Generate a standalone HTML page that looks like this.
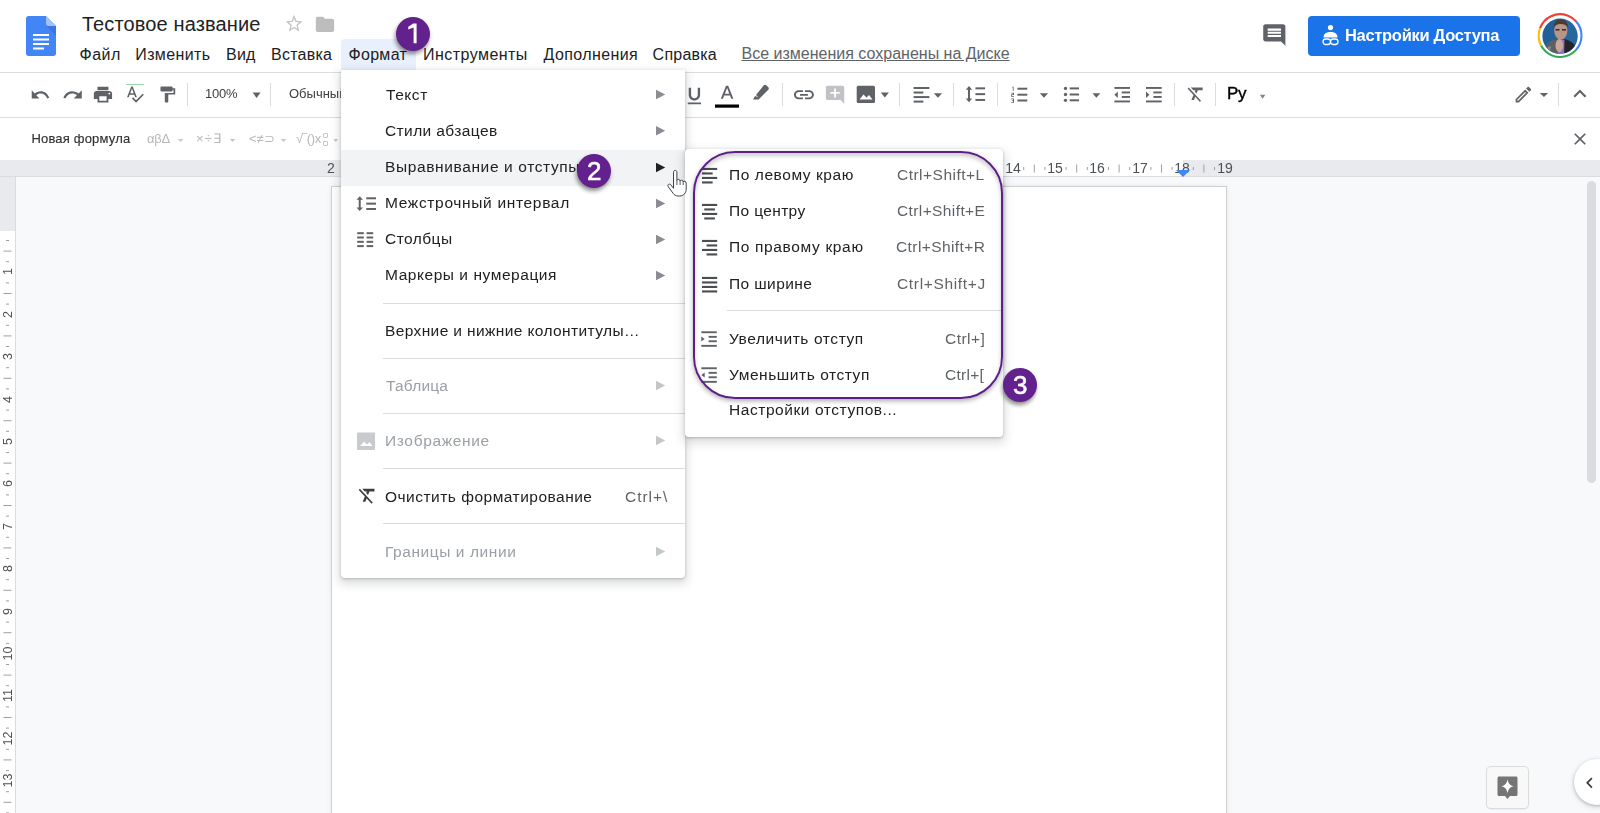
<!DOCTYPE html>
<html><head><meta charset="utf-8"><style>
html,body{margin:0;padding:0;}
body{width:1600px;height:813px;overflow:hidden;position:relative;background:#f8f9fa;font-family:"Liberation Sans", sans-serif;}
</style></head><body>
<div style="position:absolute;left:0px;top:0px;width:1600px;height:72px;background:#fff"></div>
<div style="position:absolute;left:0px;top:72px;width:1600px;height:1px;background:#dadce0"></div>
<div style="position:absolute;left:0px;top:73px;width:1600px;height:44px;background:#fff"></div>
<div style="position:absolute;left:0px;top:117px;width:1600px;height:1px;background:#dadce0"></div>
<div style="position:absolute;left:0px;top:118px;width:1600px;height:42px;background:#fff"></div>
<div style="position:absolute;left:0px;top:160px;width:1600px;height:16px;background:#e8eaed"></div>
<div style="position:absolute;left:419px;top:160px;width:764px;height:16px;background:#fff"></div>
<div style="position:absolute;left:0px;top:176px;width:1600px;height:1px;background:#dadce0"></div>
<div style="position:absolute;left:0px;top:177px;width:15px;height:54px;background:#e8eaed"></div>
<div style="position:absolute;left:0px;top:231px;width:15px;height:582px;background:#fff"></div>
<div style="position:absolute;left:15px;top:177px;width:1px;height:636px;background:#dadce0"></div>
<div style="position:absolute;left:332px;top:187px;width:894px;height:700px;background:#fff;box-shadow:0 0 0 1px #d0d0d0, 0 0 6px rgba(60,64,67,.12)"></div>
<div style="position:absolute;left:1587px;top:181px;width:9px;height:302px;background:#dadce0;border-radius:5px"></div>
<svg style="position:absolute;left:26px;top:16px;width:30px;height:40px;overflow:visible;" viewBox="0 0 30 40"><path d="M2.5 0H20L30 10V37.5C30 38.9 28.9 40 27.5 40H2.5C1.1 40 0 38.9 0 37.5V2.5C0 1.1 1.1 0 2.5 0Z" fill="#4285f4"/><path d="M20 0L30 10H22.5C21.1 10 20 8.9 20 7.5Z" fill="#a1c2fa"/><path d="M20.5 10L30 19.5V10Z" fill="#3367d6" opacity=".5"/><rect x="7" y="18" width="16" height="2" fill="#fff"/><rect x="7" y="22.5" width="16" height="2" fill="#fff"/><rect x="7" y="27" width="16" height="2" fill="#fff"/><rect x="7" y="31.5" width="11" height="2" fill="#fff"/></svg>
<div style="position:absolute;left:81.90px;top:14.00px;font-size:20px;font-weight:400;color:#202124;letter-spacing:0.125px;line-height:1;white-space:nowrap;">Тестовое название</div>
<svg style="position:absolute;left:284.32px;top:13.42px;width:20.16px;height:21.35px;" viewBox="0 0 24 24" preserveAspectRatio="none"><path d="M22 9.24l-7.19-.62L12 2 9.19 8.63 2 9.24l5.46 4.73L5.82 21 12 17.27 18.18 21l-1.63-7.03L22 9.24zM12 15.4l-3.76 2.27 1-4.28-3.32-2.88 4.38-.38L12 6.1l1.71 4.04 4.38.38-3.32 2.88 1 4.28L12 15.4z" fill="#c4c4c4"/></svg>
<svg style="position:absolute;left:314.17px;top:13.10px;width:21.96px;height:22.80px;" viewBox="0 0 24 24" preserveAspectRatio="none"><path d="M10 4H4c-1.1 0-1.99.9-1.99 2L2 18c0 1.1.9 2 2 2h16c1.1 0 2-.9 2-2V8c0-1.1-.9-2-2-2h-8l-2-2z" fill="#bdbdbd"/></svg>
<div style="position:absolute;left:341px;top:39px;width:75px;height:32px;background:#e8f0fe;border-radius:4px 4px 0 0"></div>
<div style="position:absolute;left:79.50px;top:47.00px;font-size:16px;font-weight:400;color:#202124;letter-spacing:0.500px;line-height:1;white-space:nowrap;">Файл</div>
<div style="position:absolute;left:135.25px;top:47.00px;font-size:16px;font-weight:400;color:#202124;letter-spacing:0.393px;line-height:1;white-space:nowrap;">Изменить</div>
<div style="position:absolute;left:226.00px;top:47.00px;font-size:16px;font-weight:400;color:#202124;letter-spacing:0.250px;line-height:1;white-space:nowrap;">Вид</div>
<div style="position:absolute;left:271.00px;top:47.00px;font-size:16px;font-weight:400;color:#202124;letter-spacing:0.250px;line-height:1;white-space:nowrap;">Вставка</div>
<div style="position:absolute;left:348.50px;top:47.00px;font-size:16px;font-weight:400;color:#202124;letter-spacing:0.300px;line-height:1;white-space:nowrap;">Формат</div>
<div style="position:absolute;left:423.00px;top:47.00px;font-size:16px;font-weight:400;color:#202124;letter-spacing:0.460px;line-height:1;white-space:nowrap;">Инструменты</div>
<div style="position:absolute;left:543.60px;top:47.00px;font-size:16px;font-weight:400;color:#202124;letter-spacing:0.378px;line-height:1;white-space:nowrap;">Дополнения</div>
<div style="position:absolute;left:652.60px;top:47.00px;font-size:16px;font-weight:400;color:#202124;letter-spacing:0.233px;line-height:1;white-space:nowrap;">Справка</div>
<div style="position:absolute;left:741.50px;top:46.00px;font-size:16px;font-weight:400;color:#5f6368;letter-spacing:0.003px;line-height:1;white-space:nowrap;text-decoration:underline;text-underline-offset:1px">Все изменения сохранены на Диске</div>
<svg style="position:absolute;left:1260.68px;top:22.04px;width:26.64px;height:25.92px;" viewBox="0 0 24 24" preserveAspectRatio="none"><path d="M21.99 4c0-1.1-.89-2-1.99-2H4c-1.1 0-2 .9-2 2v12c0 1.1.9 2 2 2h14l4 4-.01-18zM18 14H6v-2h12v2zm0-3H6V9h12v2zm0-3H6V6h12v2z" fill="#5f6368"/></svg>
<div style="position:absolute;left:1308px;top:16px;width:212px;height:40px;background:#1a73e8;border-radius:4px"></div>
<svg style="position:absolute;left:1322px;top:25px;width:17px;height:21px;overflow:visible;" viewBox="0 0 17 21"><circle cx="8.5" cy="2.6" r="2.6" fill="#fff"/><path d="M1.5 12.5C1.5 8.5 4.5 7 8.5 7S15.5 8.5 15.5 12.5Z" fill="#fff"/><rect x="1" y="14" width="7.5" height="5.5" rx="2.75" fill="none" stroke="#fff" stroke-width="1.3"/><rect x="8.5" y="14" width="7.5" height="5.5" rx="2.75" fill="none" stroke="#fff" stroke-width="1.3"/></svg>
<div style="position:absolute;left:1345.00px;top:27.00px;font-size:16.5px;font-weight:700;color:#fff;letter-spacing:-0.312px;line-height:1;white-space:nowrap;will-change:transform;">Настройки Доступа</div>
<svg style="position:absolute;left:1537px;top:13px;width:46px;height:46px;overflow:visible;" viewBox="0 0 46 46"><circle cx="23.1" cy="22.6" r="21.4" fill="none" stroke="#ea4335" stroke-width="2.1" stroke-dasharray="44.07 300" transform="rotate(200 23.1 22.6)"/><circle cx="23.1" cy="22.6" r="21.4" fill="none" stroke="#4285f4" stroke-width="2.1" stroke-dasharray="31.37 300" transform="rotate(318 23.1 22.6)"/><circle cx="23.1" cy="22.6" r="21.4" fill="none" stroke="#34a853" stroke-width="2.1" stroke-dasharray="41.09 300" transform="rotate(402 23.1 22.6)"/><circle cx="23.1" cy="22.6" r="21.4" fill="none" stroke="#fbbc04" stroke-width="2.1" stroke-dasharray="17.93 300" transform="rotate(512 23.1 22.6)"/><clipPath id="av"><circle cx="23" cy="23.2" r="17.6"/></clipPath><g clip-path="url(#av)"><rect width="46" height="46" fill="#22609a"/><rect x="28" width="18" height="46" fill="#2a6ca4" opacity=".6"/><ellipse cx="23.8" cy="17.5" rx="6.6" ry="9.2" fill="#b89687"/><path d="M16.8 15C16.5 9 19.5 6.5 23.8 6.5S31.2 9 30.8 15C29.5 12 27.5 11 23.8 11S18 12 16.8 15Z" fill="#4b3b31"/><rect x="18.5" y="16" width="4" height="1.6" fill="#3c2e2a"/><rect x="25" y="16" width="4" height="1.6" fill="#3c2e2a"/><path d="M6 46L10 31C13 27 18 26 21 27L23 46Z" fill="#5e5f63"/><path d="M26.5 26C31 26.5 36 29 38 33L41 46H27Z" fill="#242528"/><path d="M20 28L27.5 26.5 27 46H21Z" fill="#8b78c4"/><ellipse cx="22.3" cy="32.5" rx="3.8" ry="6.5" fill="#c9a79c"/><path d="M11 34L14 33 13 38 10 39Z" fill="#8a8b8f"/></g></svg>
<svg style="position:absolute;left:29.79px;top:83.70px;width:20.52px;height:21.60px;" viewBox="0 0 24 24" preserveAspectRatio="none"><path d="M12.5 8c-2.65 0-5.05.99-6.9 2.6L2 7v9h9l-3.62-3.62c1.39-1.16 3.16-1.88 5.12-1.88 3.54 0 6.55 2.31 7.6 5.5l2.37-.78C21.08 11.03 17.15 8 12.5 8z" fill="#5f6368"/></svg>
<svg style="position:absolute;left:62.12px;top:83.70px;width:21.58px;height:21.60px;" viewBox="0 0 24 24" preserveAspectRatio="none"><path d="M18.4 10.6C16.55 8.99 14.15 8 11.5 8c-4.65 0-8.58 3.03-9.96 7.22L3.9 16c1.05-3.19 4.05-5.5 7.6-5.5 1.95 0 3.73.72 5.12 1.88L13 16h9V7l-3.6 3.6z" fill="#5f6368"/></svg>
<svg style="position:absolute;left:92.17px;top:83.88px;width:21.90px;height:21.00px;" viewBox="0 0 24 24" preserveAspectRatio="none"><path d="M19 8H5c-1.66 0-3 1.34-3 3v6h4v4h12v-4h4v-6c0-1.66-1.34-3-3-3zm-3 11H8v-5h8v5zm3-7c-.55 0-1-.45-1-1s.45-1 1-1 1 .45 1 1-.45 1-1 1zm-1-9H6v4h12V3z" fill="#5f6368"/></svg>
<svg style="position:absolute;left:124.88px;top:84.41px;width:19.69px;height:19.94px;" viewBox="0 0 24 24" preserveAspectRatio="none"><path d="M12.45 16h2.09L9.43 3H7.57L2.46 16h2.09l1.12-3h5.64l1.14 3zm-6.02-5L8.5 5.48 10.57 11H6.43zm15.16.59l-8.09 8.09L9.83 16l-1.41 1.41 5.09 5.09L23 13l-1.41-1.41z" fill="#5f6368"/></svg>
<div style="position:absolute;left:126px;top:84px;width:18px;height:1px;background:#9fd8ae"></div>
<svg style="position:absolute;left:156.53px;top:84.90px;width:20.82px;height:19.20px;" viewBox="0 0 24 24" preserveAspectRatio="none"><path d="M18 4V3c0-.55-.45-1-1-1H5c-.55 0-1 .45-1 1v4c0 .55.45 1 1 1h12c.55 0 1-.45 1-1V6h1v4H9v11c0 .55.45 1 1 1h2c.55 0 1-.45 1-1v-9h8V4h-3z" fill="#5f6368"/></svg>
<div style="position:absolute;left:187px;top:83px;width:1px;height:23px;background:#dadce0"></div>
<div style="position:absolute;left:270px;top:83px;width:1px;height:23px;background:#dadce0"></div>
<div style="position:absolute;left:782px;top:83px;width:1px;height:23px;background:#dadce0"></div>
<div style="position:absolute;left:899px;top:83px;width:1px;height:23px;background:#dadce0"></div>
<div style="position:absolute;left:953px;top:83px;width:1px;height:23px;background:#dadce0"></div>
<div style="position:absolute;left:997px;top:83px;width:1px;height:23px;background:#dadce0"></div>
<div style="position:absolute;left:1174px;top:83px;width:1px;height:23px;background:#dadce0"></div>
<div style="position:absolute;left:1215px;top:83px;width:1px;height:23px;background:#dadce0"></div>
<div style="position:absolute;left:1558px;top:83px;width:1px;height:23px;background:#dadce0"></div>
<div style="position:absolute;left:204.50px;top:87.00px;font-size:13px;font-weight:400;color:#3c4043;letter-spacing:-0.200px;line-height:1;white-space:nowrap;will-change:transform;">100%</div>
<svg style="position:absolute;left:247.20px;top:81.60px;width:19.20px;height:25.44px;" viewBox="0 0 24 24" preserveAspectRatio="none"><path d="M7 10l5 5 5-5z" fill="#5f6368"/></svg>
<div style="position:absolute;left:288.50px;top:87.00px;font-size:13px;font-weight:400;color:#3c4043;letter-spacing:0.000px;line-height:1;white-space:nowrap;will-change:transform;">Обычный текст</div>
<svg style="position:absolute;left:683.25px;top:85.05px;width:22.80px;height:22.00px;" viewBox="0 0 24 24" preserveAspectRatio="none"><path d="M12 17c3.31 0 6-2.69 6-6V3h-2.5v8c0 1.93-1.57 3.5-3.5 3.5S8.5 12.93 8.5 11V3H6v8c0 3.31 2.69 6 6 6zm-7 2v2h14v-2H5z" fill="#5f6368"/></svg>
<svg style="position:absolute;left:715px;top:84px;width:25px;height:24px;overflow:visible;" viewBox="0 0 25 24"><path d="M5.8 14.8L11 1.7h2.2l5.2 13.1h-2.2l-1.2-3.2H9.2L8 14.8ZM9.9 9.7h4.4L12.1 3.9Z" fill="#5f6368"/><rect x="0" y="20.5" width="24" height="3.2" fill="#000"/></svg>
<svg style="position:absolute;left:752px;top:84px;width:18px;height:16px;overflow:visible;" viewBox="0 0 18 16"><path d="M3 12L1 15.5H6.5L8 14Z" fill="#5f6368"/><path d="M4 11L7.5 14.5 16.3 5.7C17 5 17 4 16.3 3.3L14.2 1.2C13.5.5 12.5.5 11.8 1.2Z" fill="#5f6368"/></svg>
<svg style="position:absolute;left:791.51px;top:83.50px;width:23.88px;height:21.60px;" viewBox="0 0 24 24" preserveAspectRatio="none"><path d="M3.9 12c0-1.71 1.39-3.1 3.1-3.1h4V7H7c-2.76 0-5 2.24-5 5s2.24 5 5 5h4v-1.9H7c-1.71 0-3.1-1.39-3.1-3.1zM8 13h8v-2H8v2zm9-6h-4v1.9h4c1.71 0 3.1 1.39 3.1 3.1s-1.39 3.1-3.1 3.1h-4V17h4c2.76 0 5-2.24 5-5s-2.24-5-5-5z" fill="#5f6368"/></svg>
<svg style="position:absolute;left:824.16px;top:83.91px;width:22.08px;height:21.48px;" viewBox="0 0 24 24" preserveAspectRatio="none"><path d="M22 4c0-1.1-.9-2-2-2H4c-1.1 0-1.99.9-1.99 2L2 16c0 1.1.9 2 2 2h14l4 4-.01-18zM17 11h-4v4h-2v-4H7V9h4V5h2v4h4v2z" fill="#c0c2c5"/></svg>
<svg style="position:absolute;left:856px;top:85px;width:20px;height:18px;overflow:visible;" viewBox="0 0 20 18"><rect x="0.7" y="0.7" width="18.3" height="17.2" rx="1.5" fill="#5f6368"/><path d="M3.5 14.5L7.5 9.5 10.5 12.5 13 10 16.5 14.5Z" fill="#fff"/></svg>
<svg style="position:absolute;left:875.06px;top:83.00px;width:19.68px;height:23.04px;" viewBox="0 0 24 24" preserveAspectRatio="none"><path d="M7 10l5 5 5-5z" fill="#5f6368"/></svg>
<svg style="position:absolute;left:0;top:0;width:1600px;height:813px;overflow:visible;pointer-events:none" viewBox="0 0 1600 813"><rect x="913.6" y="87.00" width="15.8" height="2.0" fill="#5f6368"/><rect x="913.60" y="91.53" width="9.80" height="2.0" fill="#5f6368"/><rect x="913.6" y="96.07" width="15.8" height="2.0" fill="#5f6368"/><rect x="913.60" y="100.60" width="9.80" height="2.0" fill="#5f6368"/></svg>
<svg style="position:absolute;left:928.39px;top:83.60px;width:19.92px;height:22.08px;" viewBox="0 0 24 24" preserveAspectRatio="none"><path d="M7 10l5 5 5-5z" fill="#5f6368"/></svg>
<svg style="position:absolute;left:0;top:0;width:1600px;height:813px;overflow:visible" viewBox="0 0 1600 813"><path d="M968.98 86.1L972.17 89.70H969.98V98.60H972.17L968.98 102.2L965.80 98.60H967.98V89.70H965.80Z" fill="#5f6368"/><rect x="975.45" y="87.35" width="9.65" height="2" fill="#5f6368"/><rect x="975.45" y="93.15" width="9.65" height="2" fill="#5f6368"/><rect x="975.45" y="98.95" width="9.65" height="2" fill="#5f6368"/></svg>
<svg style="position:absolute;left:0;top:0;width:1600px;height:813px;overflow:visible" viewBox="0 0 1600 813"><rect x="1017.40" y="87.70" width="9.90" height="2" fill="#5f6368"/><rect x="1017.40" y="93.70" width="9.90" height="2" fill="#5f6368"/><rect x="1017.40" y="99.50" width="9.90" height="2" fill="#5f6368"/><path d="M1012.4000000000001 86.7H1013.6V90.9H1012.8000000000001V87.60000000000001H1012.0Z" fill="#5f6368"/><path d="M1011.2 92.7H1014.0V94.9H1012.1V95.9H1014.0V96.7H1011.2V94.3H1013.1V93.5H1011.2Z" fill="#5f6368"/><path d="M1011.2 98.5H1014.0V102.7H1011.2V101.9H1013.1V101.0H1011.8000000000001V100.2H1013.1V99.3H1011.2Z" fill="#5f6368"/></svg>
<svg style="position:absolute;left:1034.29px;top:83.60px;width:19.92px;height:22.08px;" viewBox="0 0 24 24" preserveAspectRatio="none"><path d="M7 10l5 5 5-5z" fill="#5f6368"/></svg>
<svg style="position:absolute;left:0;top:0;width:1600px;height:813px;overflow:visible" viewBox="0 0 1600 813"><circle cx="1065.50" cy="88.40" r="1.65" fill="#5f6368"/><rect x="1069.70" y="87.40" width="9.30" height="2" fill="#5f6368"/><circle cx="1065.50" cy="94.50" r="1.65" fill="#5f6368"/><rect x="1069.70" y="93.50" width="9.30" height="2" fill="#5f6368"/><circle cx="1065.50" cy="100.30" r="1.65" fill="#5f6368"/><rect x="1069.70" y="99.30" width="9.30" height="2" fill="#5f6368"/></svg>
<svg style="position:absolute;left:1086.94px;top:83.60px;width:18.72px;height:22.08px;" viewBox="0 0 24 24" preserveAspectRatio="none"><path d="M7 10l5 5 5-5z" fill="#5f6368"/></svg>
<svg style="position:absolute;left:0;top:0;width:1600px;height:813px;overflow:visible" viewBox="0 0 1600 813"><rect x="1114.4" y="87" width="15.6" height="1.9" fill="#5f6368"/><rect x="1121.73" y="91.50" width="8.27" height="1.9" fill="#5f6368"/><rect x="1121.73" y="96.00" width="8.27" height="1.9" fill="#5f6368"/><rect x="1114.4" y="100.50" width="15.6" height="1.9" fill="#5f6368"/><path d="M1117.8000000000002 91.50L1114.4 94.70L1117.8000000000002 97.90Z" fill="#5f6368"/></svg>
<svg style="position:absolute;left:0;top:0;width:1600px;height:813px;overflow:visible" viewBox="0 0 1600 813"><rect x="1146" y="87" width="15.7" height="1.9" fill="#5f6368"/><rect x="1153.38" y="91.50" width="8.32" height="1.9" fill="#5f6368"/><rect x="1153.38" y="96.00" width="8.32" height="1.9" fill="#5f6368"/><rect x="1146" y="100.50" width="15.7" height="1.9" fill="#5f6368"/><path d="M1146 91.50L1149.4 94.70L1146 97.90Z" fill="#5f6368"/></svg>
<svg style="position:absolute;left:1186.33px;top:83.30px;width:20.00px;height:21.60px;" viewBox="0 0 24 24" preserveAspectRatio="none"><path d="M3.27 5L2 6.27l6.97 6.97L6.5 19h3l1.57-3.66L16.73 21 18 19.73 3.55 5.27 3.27 5zM6 5v.18L8.82 8h2.4l-.72 1.68 2.1 2.1L14.21 8H20V5H6z" fill="#5f6368"/></svg>
<div style="position:absolute;left:1227.00px;top:85.00px;font-size:17px;font-weight:400;color:#000;letter-spacing:-0.300px;line-height:1;white-space:nowrap;-webkit-text-stroke:0.4px #000">Ру</div>
<svg style="position:absolute;left:1255.85px;top:86.80px;width:13.20px;height:18.72px;" viewBox="0 0 24 24" preserveAspectRatio="none"><path d="M7 10l5 5 5-5z" fill="#80868b"/></svg>
<svg style="position:absolute;left:1513.30px;top:83.57px;width:20.80px;height:21.07px;" viewBox="0 0 24 24" preserveAspectRatio="none"><path d="M14.06 9.02l.92.92L5.92 19H5v-.92l9.06-9.06M17.66 3c-.25 0-.51.1-.7.29l-1.83 1.83 3.75 3.75 1.83-1.83c.39-.39.39-1.02 0-1.41l-2.34-2.34c-.2-.2-.45-.29-.71-.29zm-3.6 3.19L3 17.25V21h3.75L17.81 9.94l-3.75-3.75z" fill="#5f6368"/></svg>
<svg style="position:absolute;left:1533.89px;top:84.80px;width:19.92px;height:19.20px;" viewBox="0 0 24 24" preserveAspectRatio="none"><path d="M7 10l5 5 5-5z" fill="#5f6368"/></svg>
<svg style="position:absolute;left:1567.15px;top:81.37px;width:25.80px;height:25.59px;" viewBox="0 0 24 24" preserveAspectRatio="none"><path d="M12 8l-6 6 1.41 1.41L12 10.83l4.59 4.58L18 14z" fill="#5f6368"/></svg>
<div style="position:absolute;left:31.40px;top:132.00px;font-size:13px;font-weight:400;color:#303134;letter-spacing:0.192px;line-height:1;white-space:nowrap;-webkit-text-stroke:0.15px #303134">Новая формула</div>
<div style="position:absolute;left:146.50px;top:132.00px;font-size:13px;font-weight:400;color:#b4b7bb;letter-spacing:-0.300px;line-height:1;white-space:nowrap;will-change:transform;">αβΔ</div>
<svg style="position:absolute;left:173.65px;top:132.50px;width:13.20px;height:14.40px;" viewBox="0 0 24 24" preserveAspectRatio="none"><path d="M7 10l5 5 5-5z" fill="#c4c7ca"/></svg>
<div style="position:absolute;left:196.40px;top:132.00px;font-size:13px;font-weight:400;color:#b4b7bb;letter-spacing:1.050px;line-height:1;white-space:nowrap;will-change:transform;">×÷∃</div>
<svg style="position:absolute;left:225.85px;top:132.50px;width:13.20px;height:14.40px;" viewBox="0 0 24 24" preserveAspectRatio="none"><path d="M7 10l5 5 5-5z" fill="#c4c7ca"/></svg>
<div style="position:absolute;left:249.40px;top:132.00px;font-size:13px;font-weight:400;color:#b4b7bb;letter-spacing:-0.000px;line-height:1;white-space:nowrap;will-change:transform;">&lt;≠⊃</div>
<svg style="position:absolute;left:277.45px;top:132.50px;width:13.20px;height:14.40px;" viewBox="0 0 24 24" preserveAspectRatio="none"><path d="M7 10l5 5 5-5z" fill="#c4c7ca"/></svg>
<div style="position:absolute;left:296.40px;top:132.00px;font-size:13px;font-weight:400;color:#b4b7bb;letter-spacing:-0.350px;line-height:1;white-space:nowrap;will-change:transform;">√‾()x</div>
<div style="position:absolute;left:322.5px;top:133px;width:5px;height:5px;border:1.3px solid #c4c7ca;box-sizing:border-box;border-radius:1px"></div>
<div style="position:absolute;left:322.5px;top:141px;width:5px;height:5px;border:1.3px solid #c4c7ca;box-sizing:border-box;border-radius:1px"></div>
<svg style="position:absolute;left:330.24px;top:132.50px;width:11.52px;height:14.40px;" viewBox="0 0 24 24" preserveAspectRatio="none"><path d="M7 10l5 5 5-5z" fill="#c4c7ca"/></svg>
<svg style="position:absolute;left:1569.92px;top:128.52px;width:20.06px;height:20.06px;" viewBox="0 0 24 24" preserveAspectRatio="none"><path d="M19 6.41L17.59 5 12 10.59 6.41 5 5 6.41 10.59 12 5 17.59 6.41 19 12 13.41 17.59 19 19 17.59 13.41 12z" fill="#5f6368"/></svg>
<div style="position:absolute;left:316.0px;top:162px;width:30px;text-align:center;font-size:14px;line-height:13px;color:#4d5156;will-change:transform">2</div>
<div style="position:absolute;left:955.2px;top:162px;width:30px;text-align:center;font-size:14px;line-height:13px;color:#4d5156;will-change:transform">13</div>
<div style="position:absolute;left:997.6px;top:162px;width:30px;text-align:center;font-size:14px;line-height:13px;color:#4d5156;will-change:transform">14</div>
<div style="position:absolute;left:1040.0px;top:162px;width:30px;text-align:center;font-size:14px;line-height:13px;color:#4d5156;will-change:transform">15</div>
<div style="position:absolute;left:1082.4px;top:162px;width:30px;text-align:center;font-size:14px;line-height:13px;color:#4d5156;will-change:transform">16</div>
<div style="position:absolute;left:1124.8px;top:162px;width:30px;text-align:center;font-size:14px;line-height:13px;color:#4d5156;will-change:transform">17</div>
<div style="position:absolute;left:1167.2px;top:162px;width:30px;text-align:center;font-size:14px;line-height:13px;color:#4d5156;will-change:transform">18</div>
<div style="position:absolute;left:1209.6px;top:162px;width:30px;text-align:center;font-size:14px;line-height:13px;color:#4d5156;will-change:transform">19</div>
<svg style="position:absolute;left:0;top:0;width:1600px;height:813px;overflow:visible" viewBox="0 0 1600 813"><rect x="1023.2" y="167.0" width="1" height="3" fill="#9aa0a6"/><rect x="1033.8" y="164.5" width="1" height="8" fill="#9aa0a6"/><rect x="1044.4" y="167.0" width="1" height="3" fill="#9aa0a6"/><rect x="1065.6" y="167.0" width="1" height="3" fill="#9aa0a6"/><rect x="1076.2" y="164.5" width="1" height="8" fill="#9aa0a6"/><rect x="1086.8" y="167.0" width="1" height="3" fill="#9aa0a6"/><rect x="1108.0" y="167.0" width="1" height="3" fill="#9aa0a6"/><rect x="1118.6" y="164.5" width="1" height="8" fill="#9aa0a6"/><rect x="1129.2" y="167.0" width="1" height="3" fill="#9aa0a6"/><rect x="1150.4" y="167.0" width="1" height="3" fill="#9aa0a6"/><rect x="1161.0" y="164.5" width="1" height="8" fill="#9aa0a6"/><rect x="1171.6" y="167.0" width="1" height="3" fill="#9aa0a6"/><rect x="1192.8" y="167.0" width="1" height="3" fill="#9aa0a6"/><rect x="1203.4" y="164.5" width="1" height="8" fill="#9aa0a6"/><rect x="1214.0" y="167.0" width="1" height="3" fill="#9aa0a6"/></svg>
<svg style="position:absolute;left:1176px;top:170px;width:14px;height:7px;overflow:visible;" viewBox="0 0 14 7"><path d="M0 0H14L7 7Z" fill="#4285f4"/></svg>
<div style="position:absolute;left:-7px;top:265.3px;width:30px;text-align:center;font-size:12.5px;line-height:13px;color:#4d5156;transform:rotate(-90deg)">1</div>
<div style="position:absolute;left:-7px;top:307.7px;width:30px;text-align:center;font-size:12.5px;line-height:13px;color:#4d5156;transform:rotate(-90deg)">2</div>
<div style="position:absolute;left:-7px;top:350.1px;width:30px;text-align:center;font-size:12.5px;line-height:13px;color:#4d5156;transform:rotate(-90deg)">3</div>
<div style="position:absolute;left:-7px;top:392.5px;width:30px;text-align:center;font-size:12.5px;line-height:13px;color:#4d5156;transform:rotate(-90deg)">4</div>
<div style="position:absolute;left:-7px;top:434.9px;width:30px;text-align:center;font-size:12.5px;line-height:13px;color:#4d5156;transform:rotate(-90deg)">5</div>
<div style="position:absolute;left:-7px;top:477.3px;width:30px;text-align:center;font-size:12.5px;line-height:13px;color:#4d5156;transform:rotate(-90deg)">6</div>
<div style="position:absolute;left:-7px;top:519.7px;width:30px;text-align:center;font-size:12.5px;line-height:13px;color:#4d5156;transform:rotate(-90deg)">7</div>
<div style="position:absolute;left:-7px;top:562.1px;width:30px;text-align:center;font-size:12.5px;line-height:13px;color:#4d5156;transform:rotate(-90deg)">8</div>
<div style="position:absolute;left:-7px;top:604.5px;width:30px;text-align:center;font-size:12.5px;line-height:13px;color:#4d5156;transform:rotate(-90deg)">9</div>
<div style="position:absolute;left:-7px;top:646.9px;width:30px;text-align:center;font-size:12.5px;line-height:13px;color:#4d5156;transform:rotate(-90deg)">10</div>
<div style="position:absolute;left:-7px;top:689.3px;width:30px;text-align:center;font-size:12.5px;line-height:13px;color:#4d5156;transform:rotate(-90deg)">11</div>
<div style="position:absolute;left:-7px;top:731.7px;width:30px;text-align:center;font-size:12.5px;line-height:13px;color:#4d5156;transform:rotate(-90deg)">12</div>
<div style="position:absolute;left:-7px;top:774.1px;width:30px;text-align:center;font-size:12.5px;line-height:13px;color:#4d5156;transform:rotate(-90deg)">13</div>
<svg style="position:absolute;left:0;top:0;width:1600px;height:813px;overflow:visible" viewBox="0 0 1600 813"><rect x="6.0" y="240.0" width="3" height="1" fill="#9aa0a6"/><rect x="3.5" y="250.6" width="8" height="1" fill="#9aa0a6"/><rect x="6.0" y="261.2" width="3" height="1" fill="#9aa0a6"/><rect x="6.0" y="282.4" width="3" height="1" fill="#9aa0a6"/><rect x="3.5" y="293.0" width="8" height="1" fill="#9aa0a6"/><rect x="6.0" y="303.6" width="3" height="1" fill="#9aa0a6"/><rect x="6.0" y="324.8" width="3" height="1" fill="#9aa0a6"/><rect x="3.5" y="335.4" width="8" height="1" fill="#9aa0a6"/><rect x="6.0" y="346.0" width="3" height="1" fill="#9aa0a6"/><rect x="6.0" y="367.2" width="3" height="1" fill="#9aa0a6"/><rect x="3.5" y="377.8" width="8" height="1" fill="#9aa0a6"/><rect x="6.0" y="388.4" width="3" height="1" fill="#9aa0a6"/><rect x="6.0" y="409.6" width="3" height="1" fill="#9aa0a6"/><rect x="3.5" y="420.2" width="8" height="1" fill="#9aa0a6"/><rect x="6.0" y="430.8" width="3" height="1" fill="#9aa0a6"/><rect x="6.0" y="452.0" width="3" height="1" fill="#9aa0a6"/><rect x="3.5" y="462.6" width="8" height="1" fill="#9aa0a6"/><rect x="6.0" y="473.2" width="3" height="1" fill="#9aa0a6"/><rect x="6.0" y="494.4" width="3" height="1" fill="#9aa0a6"/><rect x="3.5" y="505.0" width="8" height="1" fill="#9aa0a6"/><rect x="6.0" y="515.6" width="3" height="1" fill="#9aa0a6"/><rect x="6.0" y="536.8" width="3" height="1" fill="#9aa0a6"/><rect x="3.5" y="547.4" width="8" height="1" fill="#9aa0a6"/><rect x="6.0" y="558.0" width="3" height="1" fill="#9aa0a6"/><rect x="6.0" y="579.2" width="3" height="1" fill="#9aa0a6"/><rect x="3.5" y="589.8" width="8" height="1" fill="#9aa0a6"/><rect x="6.0" y="600.4" width="3" height="1" fill="#9aa0a6"/><rect x="6.0" y="621.6" width="3" height="1" fill="#9aa0a6"/><rect x="3.5" y="632.2" width="8" height="1" fill="#9aa0a6"/><rect x="6.0" y="642.8" width="3" height="1" fill="#9aa0a6"/><rect x="6.0" y="664.0" width="3" height="1" fill="#9aa0a6"/><rect x="3.5" y="674.6" width="8" height="1" fill="#9aa0a6"/><rect x="6.0" y="685.2" width="3" height="1" fill="#9aa0a6"/><rect x="6.0" y="706.4" width="3" height="1" fill="#9aa0a6"/><rect x="3.5" y="717.0" width="8" height="1" fill="#9aa0a6"/><rect x="6.0" y="727.6" width="3" height="1" fill="#9aa0a6"/><rect x="6.0" y="748.8" width="3" height="1" fill="#9aa0a6"/><rect x="3.5" y="759.4" width="8" height="1" fill="#9aa0a6"/><rect x="6.0" y="770.0" width="3" height="1" fill="#9aa0a6"/><rect x="6.0" y="791.2" width="3" height="1" fill="#9aa0a6"/><rect x="3.5" y="801.8" width="8" height="1" fill="#9aa0a6"/><rect x="6.0" y="812.4" width="3" height="1" fill="#9aa0a6"/></svg>
<div style="position:absolute;left:1487px;top:767px;width:41px;height:41px;background:#f8f8f8;border-radius:4px;box-shadow:0 0 0 1px #dcdcdc, 0 1px 2px rgba(0,0,0,.15)"></div>
<svg style="position:absolute;left:1497px;top:776px;width:21px;height:24px;overflow:visible;" viewBox="0 0 21 24"><path d="M2 0.5H19C19.8 0.5 20.5 1.2 20.5 2V18.5C20.5 19.3 19.8 20 19 20H13L10.5 23 8 20H2C1.2 20 .5 19.3 .5 18.5V2C.5 1.2 1.2.5 2 .5Z" fill="#757575"/><path d="M10.5 3.5Q11.3 9.2 16.5 10.2 11.3 11.2 10.5 17 9.7 11.2 4.5 10.2 9.7 9.2 10.5 3.5Z" fill="#fff"/></svg>
<div style="position:absolute;left:1574px;top:759px;width:46px;height:46px;border-radius:50%;background:#fff;box-shadow:0 1px 3px rgba(60,64,67,.3),0 2px 6px rgba(60,64,67,.15)"></div>
<svg style="position:absolute;left:1578.88px;top:771.60px;width:21.05px;height:21.60px;" viewBox="0 0 24 24" preserveAspectRatio="none"><path d="M15.41 7.41L14 6l-6 6 6 6 1.41-1.41L10.83 12z" fill="#3c4043"/></svg>
<div style="position:absolute;left:341px;top:70px;width:344px;height:507.5px;background:#fff;border-radius:0 0 4px 4px;box-shadow:0 1px 3px 0 rgba(60,64,67,.3),0 4px 8px 3px rgba(60,64,67,.15)"></div>
<div style="position:absolute;left:341px;top:149.5px;width:344px;height:36.2px;background:#f1f3f4"></div>
<div style="position:absolute;left:385.50px;top:87.00px;font-size:15.5px;font-weight:400;color:#202124;letter-spacing:0.562px;line-height:1;white-space:nowrap;will-change:transform;">Текст</div>
<div style="position:absolute;left:384.50px;top:123.00px;font-size:15.5px;font-weight:400;color:#202124;letter-spacing:0.396px;line-height:1;white-space:nowrap;will-change:transform;">Стили абзацев</div>
<div style="position:absolute;left:384.50px;top:159.00px;font-size:15.5px;font-weight:400;color:#202124;letter-spacing:0.619px;line-height:1;white-space:nowrap;will-change:transform;">Выравнивание и отступы</div>
<div style="position:absolute;left:384.50px;top:195.00px;font-size:15.5px;font-weight:400;color:#202124;letter-spacing:0.668px;line-height:1;white-space:nowrap;will-change:transform;">Межстрочный интервал</div>
<div style="position:absolute;left:384.50px;top:231.00px;font-size:15.5px;font-weight:400;color:#202124;letter-spacing:0.450px;line-height:1;white-space:nowrap;will-change:transform;">Столбцы</div>
<div style="position:absolute;left:384.50px;top:267.00px;font-size:15.5px;font-weight:400;color:#202124;letter-spacing:0.550px;line-height:1;white-space:nowrap;will-change:transform;">Маркеры и нумерация</div>
<div style="position:absolute;left:384.50px;top:323.00px;font-size:15.5px;font-weight:400;color:#202124;letter-spacing:0.382px;line-height:1;white-space:nowrap;will-change:transform;">Верхние и нижние колонтитулы…</div>
<div style="position:absolute;left:385.50px;top:378.00px;font-size:15.5px;font-weight:400;color:#9aa0a6;letter-spacing:0.200px;line-height:1;white-space:nowrap;will-change:transform;">Таблица</div>
<div style="position:absolute;left:384.50px;top:433.00px;font-size:15.5px;font-weight:400;color:#9aa0a6;letter-spacing:0.650px;line-height:1;white-space:nowrap;will-change:transform;">Изображение</div>
<div style="position:absolute;left:384.50px;top:489.00px;font-size:15.5px;font-weight:400;color:#202124;letter-spacing:0.489px;line-height:1;white-space:nowrap;will-change:transform;">Очистить форматирование</div>
<div style="position:absolute;left:624.75px;top:489.00px;font-size:15.5px;font-weight:400;color:#5f6368;letter-spacing:0.950px;line-height:1;white-space:nowrap;will-change:transform;">Ctrl+\</div>
<div style="position:absolute;left:384.50px;top:544.00px;font-size:15.5px;font-weight:400;color:#9aa0a6;letter-spacing:0.571px;line-height:1;white-space:nowrap;will-change:transform;">Границы и линии</div>
<div style="position:absolute;left:383px;top:302.5px;width:302px;height:1px;background:#dadce0"></div>
<div style="position:absolute;left:383px;top:357.5px;width:302px;height:1px;background:#dadce0"></div>
<div style="position:absolute;left:383px;top:412.5px;width:302px;height:1px;background:#dadce0"></div>
<div style="position:absolute;left:383px;top:467.5px;width:302px;height:1px;background:#dadce0"></div>
<div style="position:absolute;left:383px;top:523.0px;width:302px;height:1px;background:#dadce0"></div>
<svg style="position:absolute;left:0;top:0;width:1600px;height:813px;overflow:visible" viewBox="0 0 1600 813"><path d="M656 89.85L665.2 94.60L656 99.35Z" fill="#8a8d91"/><path d="M656 126.05L665.2 130.80L656 135.55Z" fill="#8a8d91"/><path d="M656 162.75L665.2 167.50L656 172.25Z" fill="#202124"/><path d="M656 198.85L665.2 203.60L656 208.35Z" fill="#8a8d91"/><path d="M656 234.85L665.2 239.60L656 244.35Z" fill="#8a8d91"/><path d="M656 270.85L665.2 275.60L656 280.35Z" fill="#8a8d91"/><path d="M656 380.75L665.2 385.50L656 390.25Z" fill="#c4c7ca"/><path d="M656 435.75L665.2 440.50L656 445.25Z" fill="#c4c7ca"/><path d="M656 546.75L665.2 551.50L656 556.25Z" fill="#c4c7ca"/></svg>
<svg style="position:absolute;left:0;top:0;width:1600px;height:813px;overflow:visible" viewBox="0 0 1600 813"><path d="M359.72 196.2L362.94 199.80H360.72V207.50H362.94L359.72 211.1L356.50 207.50H358.72V199.80H356.50Z" fill="#5f6368"/><rect x="366.25" y="197.29" width="9.75" height="2" fill="#5f6368"/><rect x="366.25" y="202.65" width="9.75" height="2" fill="#5f6368"/><rect x="366.25" y="208.01" width="9.75" height="2" fill="#5f6368"/></svg>
<svg style="position:absolute;left:0;top:0;width:1600px;height:813px;overflow:visible" viewBox="0 0 1600 813"><rect x="357.2" y="232.2" width="6.6" height="2" fill="#5f6368"/><rect x="366.6" y="232.2" width="6.6" height="2" fill="#5f6368"/><rect x="357.2" y="236.5" width="6.6" height="2" fill="#5f6368"/><rect x="366.6" y="236.5" width="6.6" height="2" fill="#5f6368"/><rect x="357.2" y="240.8" width="6.6" height="2" fill="#5f6368"/><rect x="366.6" y="240.8" width="6.6" height="2" fill="#5f6368"/><rect x="357.2" y="245.1" width="6.6" height="2" fill="#5f6368"/><rect x="366.6" y="245.1" width="6.6" height="2" fill="#5f6368"/></svg>
<svg style="position:absolute;left:357px;top:432px;width:18px;height:18px;overflow:visible;" viewBox="0 0 18 18"><rect x="0" y="0.5" width="18" height="17.5" rx="1" fill="#c8cacd"/><path d="M3 14L7 9.5 10 12.5 12.5 10 15.5 14Z" fill="#fff"/></svg>
<svg style="position:absolute;left:357.00px;top:484.06px;width:21.00px;height:22.50px;" viewBox="0 0 24 24" preserveAspectRatio="none"><path d="M3.27 5L2 6.27l6.97 6.97L6.5 19h3l1.57-3.66L16.73 21 18 19.73 3.55 5.27 3.27 5zM6 5v.18L8.82 8h2.4l-.72 1.68 2.1 2.1L14.21 8H20V5H6z" fill="#3c4043"/></svg>
<div style="position:absolute;left:685px;top:149px;width:318px;height:288px;background:#fff;border-radius:4px;box-shadow:0 1px 3px 0 rgba(60,64,67,.3),0 4px 8px 3px rgba(60,64,67,.15)"></div>
<div style="position:absolute;left:728.80px;top:167.00px;font-size:15.5px;font-weight:400;color:#202124;letter-spacing:0.569px;line-height:1;white-space:nowrap;will-change:transform;">По левому краю</div>
<div style="position:absolute;left:896.70px;top:167.00px;font-size:15.5px;font-weight:400;color:#5f6368;letter-spacing:0.482px;line-height:1;white-space:nowrap;will-change:transform;">Ctrl+Shift+L</div>
<svg style="position:absolute;left:0;top:0;width:1600px;height:813px;overflow:visible;pointer-events:none" viewBox="0 0 1600 813"><rect x="702" y="167.90" width="15.2" height="2.1" fill="#4a4d52"/><rect x="702.00" y="172.40" width="10.64" height="2.1" fill="#4a4d52"/><rect x="702" y="176.90" width="15.2" height="2.1" fill="#4a4d52"/><rect x="702.00" y="181.40" width="10.64" height="2.1" fill="#4a4d52"/></svg>
<div style="position:absolute;left:728.80px;top:203.00px;font-size:15.5px;font-weight:400;color:#202124;letter-spacing:0.363px;line-height:1;white-space:nowrap;will-change:transform;">По центру</div>
<div style="position:absolute;left:896.70px;top:203.00px;font-size:15.5px;font-weight:400;color:#5f6368;letter-spacing:0.391px;line-height:1;white-space:nowrap;will-change:transform;">Ctrl+Shift+E</div>
<svg style="position:absolute;left:0;top:0;width:1600px;height:813px;overflow:visible;pointer-events:none" viewBox="0 0 1600 813"><rect x="702" y="203.90" width="15.2" height="2.1" fill="#4a4d52"/><rect x="704.28" y="208.40" width="10.64" height="2.1" fill="#4a4d52"/><rect x="702" y="212.90" width="15.2" height="2.1" fill="#4a4d52"/><rect x="704.28" y="217.40" width="10.64" height="2.1" fill="#4a4d52"/></svg>
<div style="position:absolute;left:728.80px;top:239.00px;font-size:15.5px;font-weight:400;color:#202124;letter-spacing:0.650px;line-height:1;white-space:nowrap;will-change:transform;">По правому краю</div>
<div style="position:absolute;left:895.50px;top:239.00px;font-size:15.5px;font-weight:400;color:#5f6368;letter-spacing:0.409px;line-height:1;white-space:nowrap;will-change:transform;">Ctrl+Shift+R</div>
<svg style="position:absolute;left:0;top:0;width:1600px;height:813px;overflow:visible;pointer-events:none" viewBox="0 0 1600 813"><rect x="702" y="239.90" width="15.2" height="2.1" fill="#4a4d52"/><rect x="706.56" y="244.40" width="10.64" height="2.1" fill="#4a4d52"/><rect x="702" y="248.90" width="15.2" height="2.1" fill="#4a4d52"/><rect x="706.56" y="253.40" width="10.64" height="2.1" fill="#4a4d52"/></svg>
<div style="position:absolute;left:728.80px;top:276.00px;font-size:15.5px;font-weight:400;color:#202124;letter-spacing:0.400px;line-height:1;white-space:nowrap;will-change:transform;">По ширине</div>
<div style="position:absolute;left:896.70px;top:276.00px;font-size:15.5px;font-weight:400;color:#5f6368;letter-spacing:0.664px;line-height:1;white-space:nowrap;will-change:transform;">Ctrl+Shift+J</div>
<svg style="position:absolute;left:0;top:0;width:1600px;height:813px;overflow:visible;pointer-events:none" viewBox="0 0 1600 813"><rect x="702" y="276.90" width="15.2" height="2.1" fill="#4a4d52"/><rect x="702" y="281.40" width="15.2" height="2.1" fill="#4a4d52"/><rect x="702" y="285.90" width="15.2" height="2.1" fill="#4a4d52"/><rect x="702" y="290.40" width="15.2" height="2.1" fill="#4a4d52"/></svg>
<div style="position:absolute;left:726.6px;top:309.8px;width:276.4px;height:1px;background:#dadce0"></div>
<div style="position:absolute;left:728.80px;top:331.00px;font-size:15.5px;font-weight:400;color:#202124;letter-spacing:0.587px;line-height:1;white-space:nowrap;will-change:transform;">Увеличить отступ</div>
<div style="position:absolute;left:944.60px;top:331.00px;font-size:15.5px;font-weight:400;color:#5f6368;letter-spacing:0.480px;line-height:1;white-space:nowrap;will-change:transform;">Ctrl+]</div>
<div style="position:absolute;left:728.80px;top:367.00px;font-size:15.5px;font-weight:400;color:#202124;letter-spacing:0.553px;line-height:1;white-space:nowrap;will-change:transform;">Уменьшить отступ</div>
<div style="position:absolute;left:944.60px;top:367.00px;font-size:15.5px;font-weight:400;color:#5f6368;letter-spacing:0.280px;line-height:1;white-space:nowrap;will-change:transform;">Ctrl+[</div>
<div style="position:absolute;left:728.80px;top:402.00px;font-size:15.5px;font-weight:400;color:#202124;letter-spacing:0.560px;line-height:1;white-space:nowrap;will-change:transform;">Настройки отступов...</div>
<svg style="position:absolute;left:0;top:0;width:1600px;height:813px;overflow:visible" viewBox="0 0 1600 813"><rect x="701.3" y="331.3" width="15.5" height="1.9" fill="#5f6368"/><rect x="708.5999999999999" y="335.90000000000003" width="8.2" height="1.9" fill="#5f6368"/><rect x="708.5999999999999" y="340.3" width="8.2" height="1.9" fill="#5f6368"/><rect x="701.3" y="344.90000000000003" width="15.5" height="1.9" fill="#5f6368"/><path d="M701.3 336.5L704.6999999999999 339.0L701.3 341.5Z" fill="#5f6368"/></svg>
<svg style="position:absolute;left:0;top:0;width:1600px;height:813px;overflow:visible" viewBox="0 0 1600 813"><rect x="701.3" y="367.3" width="15.5" height="1.9" fill="#5f6368"/><rect x="708.5999999999999" y="371.90000000000003" width="8.2" height="1.9" fill="#5f6368"/><rect x="708.5999999999999" y="376.3" width="8.2" height="1.9" fill="#5f6368"/><rect x="701.3" y="380.90000000000003" width="15.5" height="1.9" fill="#5f6368"/><path d="M704.6999999999999 372.5L701.3 375.0L704.6999999999999 377.5Z" fill="#5f6368"/></svg>
<div style="position:absolute;left:693px;top:150.5px;width:309.5px;height:248.5px;border:2.8px solid #5c1f87;border-radius:42px;box-sizing:border-box;box-shadow:0 2px 5px rgba(0,0,0,.33), inset 0 3px 4px rgba(0,0,0,.2)"></div>
<div style="position:absolute;left:395.5px;top:16.799999999999997px;width:34px;height:34px;border-radius:50%;background:#62218c;box-shadow:-1px 3px 4px rgba(0,0,0,.45)"></div>
<svg style="position:absolute;left:395.5px;top:16.799999999999997px;width:34px;height:34px;overflow:visible;" viewBox="0 0 34 34"><path d="M17.6 6.6H20.6V26.3H17.6V10.6L12.3 12.5V9.8L17.2 6.6Z" fill="#fff"/></svg>
<div style="position:absolute;left:577.1px;top:153.5px;width:34px;height:34px;border-radius:50%;background:#62218c;box-shadow:-1px 3px 4px rgba(0,0,0,.45)"></div>
<div style="position:absolute;left:586.80px;top:158.00px;font-size:26px;font-weight:400;color:#fff;letter-spacing:0.000px;line-height:1;white-space:nowrap;will-change:transform;-webkit-text-stroke:0.55px #fff">2</div>
<div style="position:absolute;left:1002.9px;top:368px;width:34px;height:34px;border-radius:50%;background:#62218c;box-shadow:-1px 3px 4px rgba(0,0,0,.45)"></div>
<div style="position:absolute;left:1012.60px;top:372.00px;font-size:26px;font-weight:400;color:#fff;letter-spacing:0.000px;line-height:1;white-space:nowrap;will-change:transform;-webkit-text-stroke:0.55px #fff">3</div>
<svg style="position:absolute;left:665.5px;top:170px;width:24px;height:28px;overflow:visible;" viewBox="0 0 24 28"><path d="M7.5 2.2C7.5 1.1 8.3.4 9.2.4S10.9 1.1 10.9 2.2V10.4C11.2 9.6 12 9.2 12.8 9.4 13.6 9.6 14.1 10.3 14.1 11.1 14.4 10.4 15.1 10 15.9 10.2 16.7 10.4 17.2 11.1 17.2 11.9 17.6 11.3 18.3 11.1 19 11.3 19.8 11.6 20.2 12.3 20.2 13.1V19C20.2 22.8 17.6 26 13.7 26H12.2C9.7 26 8.3 25 7 23.2L2.2 16.6C1.7 15.9 1.8 14.9 2.5 14.4 3.2 13.9 4.2 14 4.7 14.7L7.5 18.3Z" fill="#fff" stroke="#2a2d33" stroke-width="0.9"/><path d="M10.9 10.4V15M14.1 11.1V15M17.2 11.9V15" stroke="#2a2d33" stroke-width="0.8"/></svg>
</body></html>
